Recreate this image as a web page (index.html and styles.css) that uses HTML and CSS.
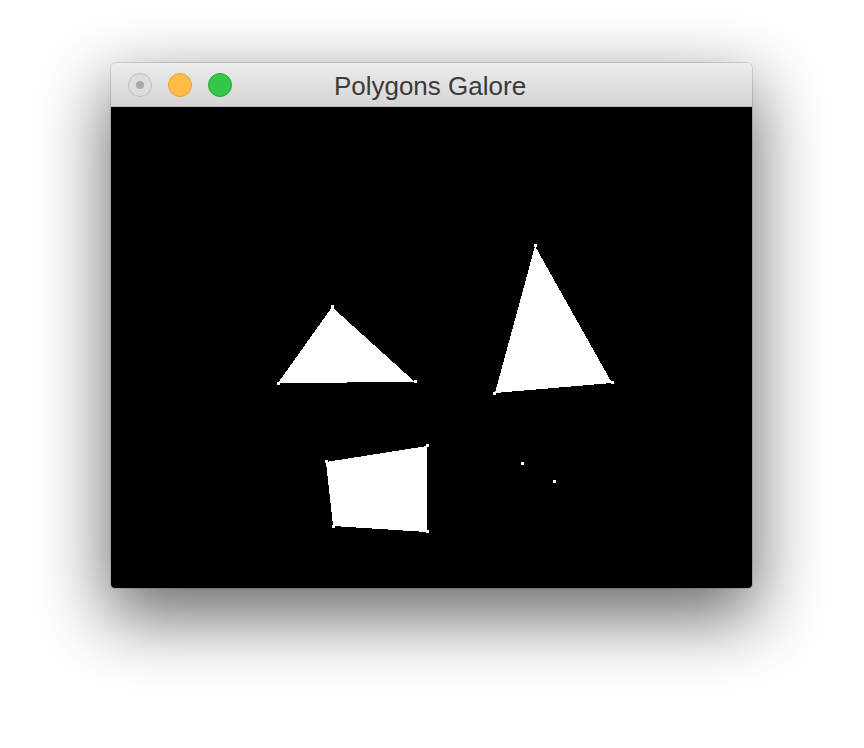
FILE: index.html
```html
<!DOCTYPE html>
<html>
<head>
<meta charset="utf-8">
<link rel="stylesheet" href="styles.css">
</head>
<body>
<div class="stage">
  <div class="window">
    <div class="titlebar">
      <div class="lights">
        <span class="light close"><span class="dot"></span></span>
        <span class="light min"></span>
        <span class="light max"></span>
      </div>
      <div class="title">Polygons Galore</div>
    </div>
    <div class="canvas">
      <svg width="641" height="481" viewBox="0 -1 641 481" shape-rendering="crispEdges">
        <polygon points="221,199 167,275 304,274" fill="#fff"/>
        <polygon points="424,138 384,285 501,275" fill="#fff"/>
        <polygon points="215,354 316,338 316,424 222,418" fill="#fff"/>
        <g fill="#fff">
          <rect x="220" y="197" width="3" height="3"/>
          <rect x="166" y="274" width="3" height="3"/>
          <rect x="303" y="272" width="3" height="3"/>
          <rect x="423" y="136" width="3" height="3"/>
          <rect x="382" y="284" width="3" height="3"/>
          <rect x="500" y="273" width="3" height="3"/>
          <rect x="214" y="352" width="3" height="3"/>
          <rect x="315" y="336" width="3" height="3"/>
          <rect x="315" y="422" width="3" height="3"/>
          <rect x="221" y="417" width="3" height="3"/>
          <rect x="410" y="354" width="3" height="3"/>
          <rect x="442" y="372" width="3" height="3"/>
        </g>
      </svg>
    </div>
  </div>
</div>
</body>
</html>
```
FILE: styles.css
```css
html, body {
  margin: 0;
  padding: 0;
  background: #ffffff;
}
.stage {
  box-sizing: border-box;
  min-height: 748px;
  padding: 63px 0 0 111px;
}
.window {
  width: 641px;
  display: flex;
  flex-direction: column;
  border-radius: 6px 6px 4px 4px;
  overflow: hidden;
  box-shadow: 0 26px 70px 4px rgba(0,0,0,0.58), 0 0 0 1px rgba(0,0,0,0.12);
}
.titlebar {
  position: relative;
  height: 44px;
  box-sizing: border-box;
  border-bottom: 1px solid #b9b9b9;
  background: linear-gradient(#ececec, #d6d5d6);
  display: flex;
  align-items: center;
  justify-content: center;
}
.lights {
  position: absolute;
  left: 17px;
  top: 10px;
  display: flex;
  gap: 16px;
}
.light {
  width: 22px;
  height: 22px;
  border-radius: 50%;
  display: flex;
  align-items: center;
  justify-content: center;
}
.close {
  background: #dedcde;
  border: 1px solid #bdbcbd;
}
.close .dot {
  width: 8px;
  height: 8px;
  border-radius: 50%;
  background: #a9a8a9;
}
.min {
  background: #ffbd45;
  border: 1px solid #e2a238;
}
.max {
  background: #34c84a;
  border: 1px solid #28a83a;
}
.title {
  font-family: "Liberation Sans", Arial, sans-serif;
  font-size: 26px;
  color: #3b3a3b;
  margin-top: 4px;
  margin-left: -3px;
}
.canvas {
  height: 481px;
  background: #000;
}
.canvas svg {
  display: block;
}
```
